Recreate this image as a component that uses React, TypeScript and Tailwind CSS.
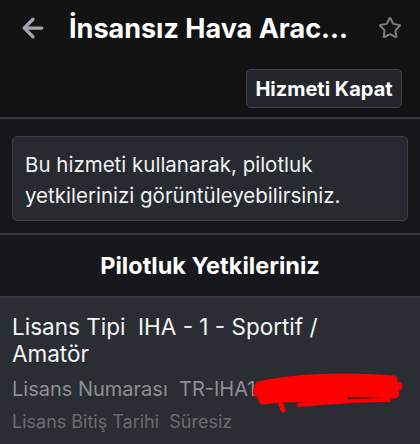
import { ArrowLeft, Star } from 'lucide-react';

function Header() {
  return (
    <div className="bg-[#121212]">
      <div className="flex h-[56px] items-center px-[18px]">
        <ArrowLeft className="h-[30px] w-[30px] text-[#a3a3ab]" strokeWidth={2.6} />
        <h1 className="flex-1 pl-[21px] text-[27px] font-bold leading-none text-white">İnsansız Hava Arac...</h1>
        <Star className="h-[24px] w-[24px] text-[#7c7c80]" strokeWidth={2} />
      </div>
      <div className="flex justify-end px-[18px] pb-[9px] pt-[13px]">
        <button className="h-[39px] w-[156px] rounded-[5px] border border-[#3f434a] bg-[#22252a] text-[20px] font-bold text-white">
          Hizmeti Kapat
        </button>
      </div>
    </div>
  );
}

function Scribble() {
  return (
    <svg className="pointer-events-none absolute left-[253px] top-[74px]" width="150" height="42" viewBox="0 0 150 42">
      <path
        d="M6 14 C40 6 90 4 140 8 M4 20 C50 14 100 12 145 14 M8 24 C60 20 110 20 142 22 M10 28 C40 24 70 26 90 26"
        stroke="#ff0000"
        strokeWidth="9"
        fill="none"
        strokeLinecap="round"
      />
      <path d="M26 26 L30 38" stroke="#ff0000" strokeWidth="5" fill="none" strokeLinecap="round" />
      <path d="M46 33 C80 30 110 28 136 28" stroke="#ff0000" strokeWidth="4" fill="none" strokeLinecap="round" />
    </svg>
  );
}

export default function App() {
  return (
    <div className="flex h-[444px] w-[420px] flex-col overflow-hidden bg-[#17181c] font-['Inter',sans-serif]">
      <Header />
      <div className="border-t-2 border-[#37393f] px-[12px] pb-[12px] pt-[17px]">
        <div className="rounded-[5px] border border-[#3b3f46] bg-[#272a30] px-[12px] pb-[9px] pt-[12px] text-[20.5px] leading-[31px] text-[#f2f2f2]">
          Bu hizmeti kullanarak, pilotluk yetkilerinizi görüntüleyebilirsiniz.
        </div>
      </div>
      <div className="flex h-[65px] items-center justify-center border-y-2 border-[#37393f] text-[23.5px] font-bold text-white">
        Pilotluk Yetkileriniz
      </div>
      <div className="relative flex-1 bg-[#2a2d33] px-[12px] pt-[15px]">
        <div className="pr-[70px] text-[22.5px] leading-[27px] text-[#f5f5f5]">
          Lisans Tipi&nbsp; IHA - 1 - Sportif / Amatör
        </div>
        <div className="mt-[7px] text-[20px] leading-[30px] text-[#8e8f94]">
          Lisans Numarası&nbsp; TR-IHA1
        </div>
        <div className="mt-[3px] text-[18px] leading-[30px] text-[#6b6c71]">
          Lisans Bitiş Tarihi&nbsp; Süresiz
        </div>
        <Scribble />
      </div>
    </div>
  );
}
